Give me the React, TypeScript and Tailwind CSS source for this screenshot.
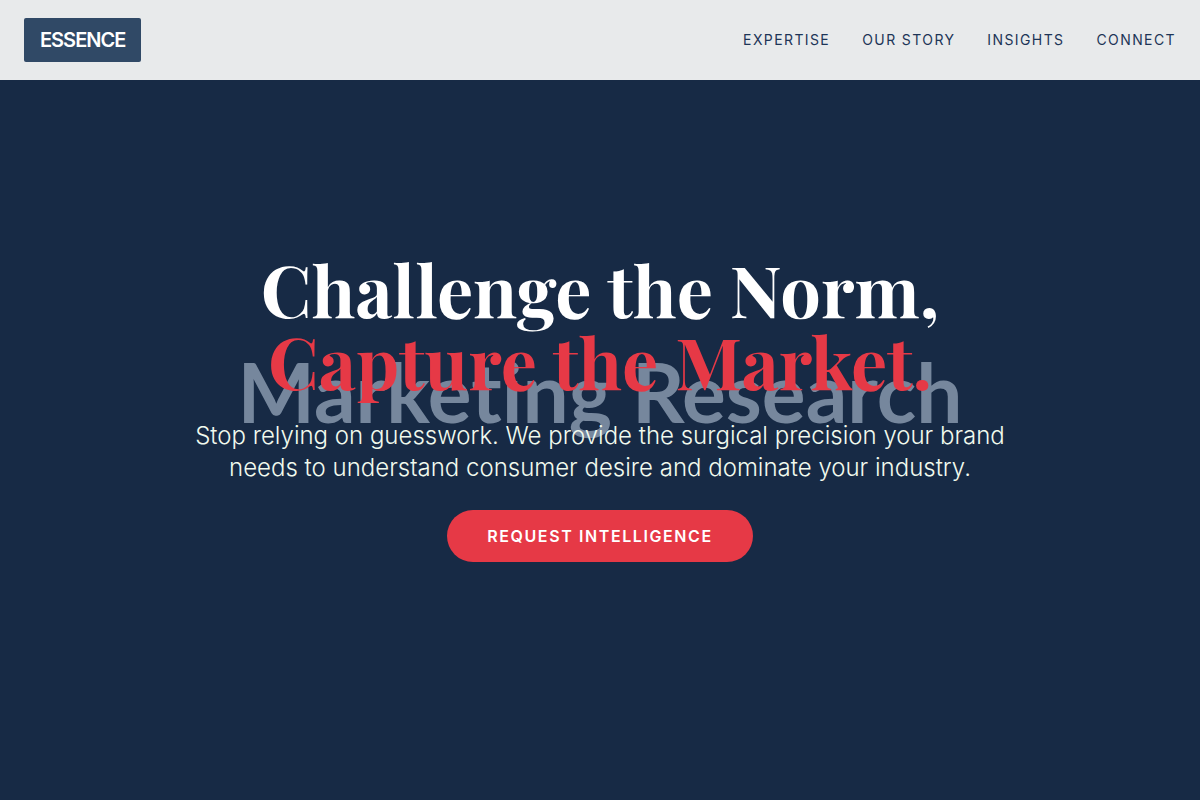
const links = ["Expertise", "Our Story", "Insights", "Connect"];

export default function App() {
  return (
    <div className="flex min-h-screen flex-col bg-[#172a45] font-['Inter',sans-serif]">
      <header className="flex h-20 items-center justify-between bg-[#e8eaeb] px-6">
        <a href="#home" className="rounded-xs bg-[#304966] px-4 py-2 text-xl leading-7 font-semibold tracking-tighter text-white">
          ESSENCE
        </a>
        <nav className="flex gap-8">
          {links.map((label) => (
            <a key={label} href="#section" className="text-sm tracking-widest text-[#1d3557] uppercase">
              {label}
            </a>
          ))}
        </nav>
      </header>
      <main className="relative flex grow items-center justify-center px-6 pb-[66px]">
        <div aria-hidden="true" className="absolute inset-x-0 top-0 flex h-[622px] items-center justify-center font-[Lato,sans-serif] text-[82px] leading-none font-bold text-[#76879d] [font-variant-ligatures:none]">
          Marketing Research
        </div>
        <div className="relative flex max-w-4xl flex-col items-center px-6 text-center">
          <h1 className="mb-6 font-['Playfair_Display','Liberation_Serif',serif] text-7xl leading-none font-bold text-white">
            Challenge the Norm,
            <br />
            <span className="text-[#e63946]">Capture the Market.</span>
          </h1>
          <p className="mb-[26px] text-2xl leading-8 font-light text-[#f1faee]">
            Stop relying on guesswork. We provide the surgical precision your brand needs to understand consumer desire and dominate your industry.
          </p>
          <button type="button" className="rounded-full bg-[#e63946] px-10 py-3 text-base leading-7 font-semibold tracking-widest text-white">
            REQUEST INTELLIGENCE
          </button>
        </div>
      </main>
    </div>
  );
}
